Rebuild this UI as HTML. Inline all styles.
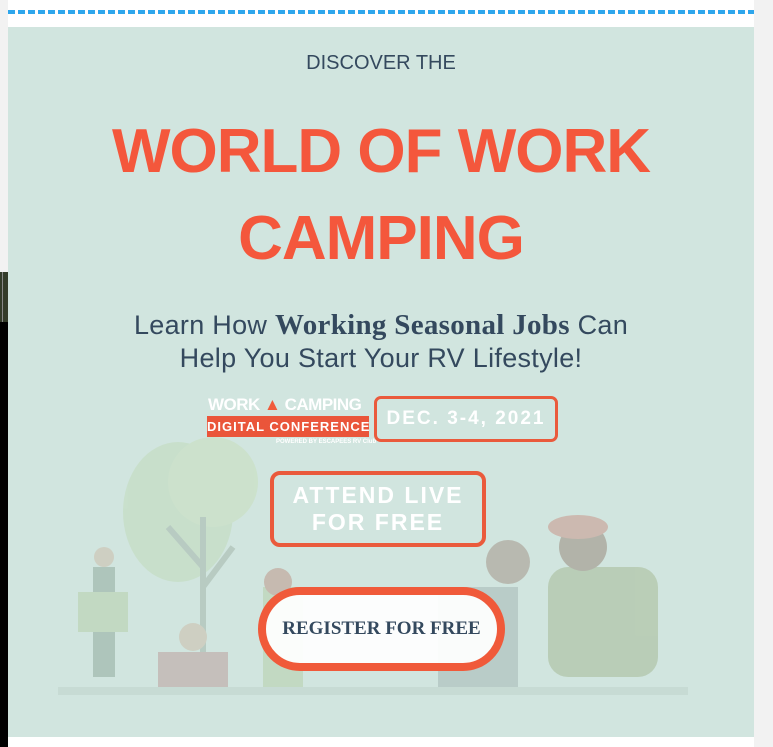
<!DOCTYPE html>
<html><head><meta charset="utf-8"><style>
html,body{margin:0;padding:0;width:773px;height:747px;overflow:hidden;background:#f2f2f2;font-family:"Liberation Sans",sans-serif;}
.abs{position:absolute}
.card{position:absolute;left:8px;top:0;width:746px;height:747px;background:#fff}
.mint{position:absolute;left:8px;top:27px;width:746px;height:710px;background:#d1e5df;overflow:hidden}
.c{position:absolute;left:0;width:746px;text-align:center}
</style></head><body>
<div class="card"></div>
<div class="abs" style="left:8px;top:10px;width:746px;height:4px;background:repeating-linear-gradient(90deg,#2ea6ec 0 7px,transparent 7px 10px)"></div>
<div class="abs" style="left:0;top:272px;width:8px;height:50px;background:#343c2a"></div>
<div class="abs" style="left:2px;top:272px;width:1px;height:50px;background:#888"></div>
<div class="abs" style="left:0;top:322px;width:8px;height:425px;background:#000"></div>
<div class="mint">
<svg class="abs" style="left:0;top:0" width="746" height="710">
<g opacity="0.35">
<ellipse cx="170" cy="485" rx="55" ry="70" fill="#b9d6a8"/>
<ellipse cx="205" cy="455" rx="45" ry="45" fill="#c3dca9"/>
<path d="M195 490 L195 640 M195 540 L160 500 M195 560 L225 520" stroke="#8a9c8e" stroke-width="6" fill="none"/>
<rect x="85" y="540" width="22" height="110" fill="#6f8c7a"/>
<circle cx="96" cy="530" r="10" fill="#c9a98e"/>
<rect x="70" y="565" width="50" height="40" fill="#a8c48e"/>
<rect x="150" y="625" width="70" height="35" fill="#b07a7a"/>
<circle cx="185" cy="610" r="14" fill="#c9a98e"/>
<rect x="255" y="560" width="40" height="100" fill="#a8c48e"/>
<circle cx="270" cy="555" r="14" fill="#b36b5a"/>
<rect x="430" y="560" width="80" height="100" fill="#8f9ea0"/>
<circle cx="500" cy="535" r="22" fill="#8a6a5a"/>
<path d="M550 590 L570 540 L590 590 Z M545 620 L570 570 L595 620 Z" fill="#6f9a86"/>
<rect x="540" y="540" width="110" height="110" rx="20" fill="#8fa36e"/>
<circle cx="575" cy="520" r="24" fill="#7a5848"/>
<ellipse cx="570" cy="500" rx="30" ry="12" fill="#c36a5a"/>
<rect x="50" y="660" width="630" height="8" fill="#b7c9c0"/>
</g>
</svg>
<div class="c" style="top:25px;font-size:20px;color:#34495e">DISCOVER THE</div>
<div class="c" style="top:81px;font-size:62px;line-height:87px;font-weight:bold;color:#f4573c;letter-spacing:-1px">WORLD OF WORK<br>CAMPING</div>
<div class="c" style="top:282px;font-size:27px;line-height:33px;color:#34495e;letter-spacing:0.3px">Learn How <b style="font-family:'Liberation Serif',serif;font-size:29px">Working Seasonal Jobs</b> Can<br>Help You Start Your RV Lifestyle!</div>
<!-- logo -->
<div class="abs" style="left:200px;top:368px;width:165px;white-space:nowrap;font-weight:bold;color:#fff;font-size:17px;line-height:20px;letter-spacing:-0.5px">WORK <span style="color:#f05a3a">▲</span> CAMPING</div>
<div class="abs" style="left:199px;top:389px;width:162px;height:21px;background:#ea553a;color:#fff;font-weight:bold;font-size:13px;line-height:21px;text-align:center;letter-spacing:1px;white-space:nowrap">DIGITAL CONFERENCE</div>
<div class="abs" style="left:268px;top:412px;font-size:6px;color:#fff;font-weight:bold;white-space:nowrap">POWERED BY ESCAPEES RV Club</div>
<div class="abs" style="left:366px;top:369px;width:178px;height:40px;border:3px solid #ea5a3c;border-radius:7px;color:#fff;font-size:19px;line-height:40px;text-align:center;letter-spacing:2px;font-weight:bold;white-space:nowrap">DEC. 3-4, 2021</div>
<div class="abs" style="left:262px;top:444px;width:208px;border:4px solid #ea5a3c;border-radius:10px;color:#fff;font-size:23px;line-height:27px;padding-top:7px;text-align:center;letter-spacing:2px;font-weight:bold;height:61px">ATTEND LIVE<br>FOR FREE</div>
<div class="abs" style="left:250px;top:560px;width:231px;height:68px;border:8px solid #f05a3a;border-radius:45px;background:rgba(255,255,255,0.93);color:#34495e;font-family:'Liberation Serif',serif;font-weight:bold;font-size:19px;line-height:68px;text-align:center">REGISTER FOR FREE</div>
</div>
</body></html>
